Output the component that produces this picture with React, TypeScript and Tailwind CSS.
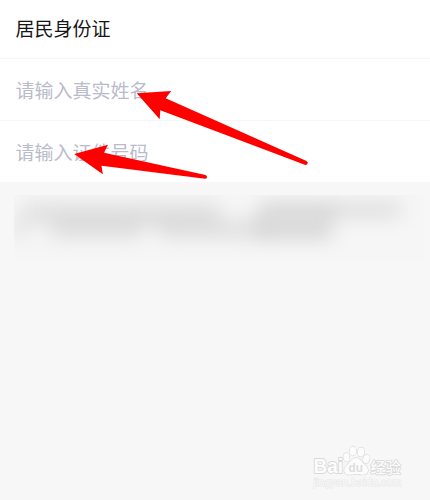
const blobs = [
  { x: 22, y: 201, w: 198, h: 24, o: 0.072 },
  { x: 50, y: 217, w: 90, h: 24, o: 0.07 },
  { x: 160, y: 217, w: 104, h: 24, o: 0.07 },
  { x: 130, y: 217, w: 40, h: 14, o: 0.03 },
  { x: 10, y: 218, w: 18, h: 22, o: 0.05 },
  { x: 258, y: 201, w: 74, h: 40, o: 0.105 },
  { x: 328, y: 200, w: 73, h: 20, o: 0.075 },
];

function BlurredNotice() {
  return (
    <svg className="mt-[13px] ml-[14px] block h-[66px] w-[410px]" viewBox="14 195 410 66">
      <defs>
        <filter id="soften" x="-50%" y="-100%" width="200%" height="300%" colorInterpolationFilters="sRGB">
          <feGaussianBlur stdDeviation="10 8.5" />
        </filter>
      </defs>
      <rect x="14" y="195" width="410" height="66" fill="#f6f6f6" />
      <g filter="url(#soften)">
        {blobs.map((b) => (
          <rect key={`${b.x}-${b.y}`} x={b.x} y={b.y} width={b.w} height={b.h} fill="#000" opacity={b.o} />
        ))}
      </g>
    </svg>
  );
}

function Watermark() {
  return (
    <svg className="absolute top-[440px] left-[308px] h-[54px] w-[110px]" viewBox="308 440 110 54">
      <g fill="#fcfcfc" stroke="#d9d9d9" strokeWidth="1.8" strokeLinejoin="round" paintOrder="stroke" fontFamily="'Liberation Sans', 'Noto Sans CJK SC', sans-serif">
        <text x="313.500" y="473.300" fontSize="20" textLength="29.5" lengthAdjust="spacingAndGlyphs" fontWeight="bold">Bai</text>
        <g strokeWidth="1.3">
          <ellipse cx="346.500" cy="457.300" rx="3" ry="4.200" transform="rotate(-12 346.5 457.3)" />
          <ellipse cx="353" cy="451" rx="3.200" ry="4.600" />
          <ellipse cx="361" cy="452" rx="3.200" ry="4.600" transform="rotate(8 361 452)" />
          <ellipse cx="366.300" cy="459" rx="3.200" ry="4.100" transform="rotate(15 366.3 459)" />
          <path d="M356.200 458c-4 0-5.300 3.300-7.900 5.700-2.700 2.400-4.500 4.400-4.100 7.200.4 2.900 2.700 4 5.500 3.800 2.400-.2 4-.4 6.500-.4s4.300.3 6.500.4c3 .2 5.200-1.300 5.300-4.100.1-2.700-1.700-4.400-4.300-6.900-2.500-2.400-3.700-5.700-7.500-5.700z" />
        </g>
        <text x="348.500" y="471.800" fontSize="13.500" fontWeight="bold" fill="#dedede" stroke="none" textLength="14.5" lengthAdjust="spacingAndGlyphs">du</text>
        <text x="370.500" y="472.800" fontSize="15.200" fontWeight="500" strokeWidth="1.6" fontFamily="'Noto Sans CJK SC', sans-serif">经验</text>
        <text x="313.500" y="485.500" fontSize="11" fill="#f8f8f8" strokeWidth="1.1" stroke="#e8e8e8" textLength="88" lengthAdjust="spacingAndGlyphs">jingyan.baidu.com</text>
      </g>
    </svg>
  );
}

function Arrows() {
  return (
    <svg className="pointer-events-none absolute inset-0 h-[200px] w-[430px]" viewBox="0 0 430 200" fill="#fe0000">
      <path d="M136.700 93.300L171.200 91l-5.500 7.300L306.500 161Q308.300 162.200 307.500 163.800T304.800 164.700L160.300 110.200 159.700 119.200Z" />
      <path d="M74.200 154L108 144.700l-4 8L205.500 175Q207.200 175.700 207 177.200T205 178.800L101.500 165.700l1.300 8.500Z" />
    </svg>
  );
}

export default function App() {
  return (
    <div className="relative h-[500px] w-[430px] overflow-hidden bg-[#f7f7f7] font-['Noto_Sans_CJK_SC',sans-serif] text-[19px] leading-7">
      <div className="bg-white">
        <div className="flex h-[59px] items-center border-b border-[#f6f6f6] pr-4 pb-[3px] pl-[15.5px] text-[#161616]">居民身份证</div>
        <div className="flex h-[62px] items-center border-b border-[#f6f6f6] pr-4 pl-[15.5px] text-[#b9bbcb]">请输入真实姓名</div>
        <div className="flex h-[61px] items-center pr-4 pl-[15.5px] text-[#b9bbcb]">请输入证件号码</div>
      </div>
      <BlurredNotice />
      <Arrows />
      <Watermark />
    </div>
  );
}
